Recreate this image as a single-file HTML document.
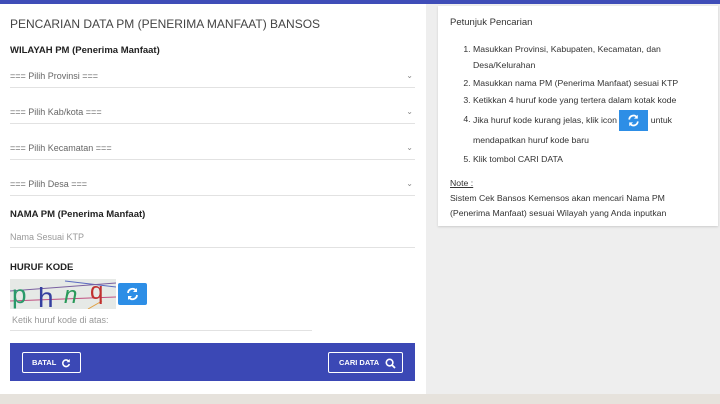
<!DOCTYPE html><html><head><style>
body{margin:0;width:720px;height:404px;overflow:hidden;background:#eeeeee;font-family:"Liberation Sans",sans-serif;position:relative}
.top{position:absolute;left:0;top:0;width:720px;height:4px;background:#3f4db8}
.left{position:absolute;left:0;top:0;width:426px;height:394px;background:#fff}
.t{position:absolute;left:10px;top:17px;font-size:12px;color:#444}
.lb{position:absolute;left:10px;font-size:9.5px;font-weight:bold;color:#222}
.sel{position:absolute;left:10px;width:405px;height:16px;padding-top:2px;border-bottom:1px solid #e2e2e2;font-size:9px;color:#666}
.sel span{position:absolute;right:2px;top:2px;font-size:8px;color:#888}
.ph{position:absolute;font-size:9px;color:#999}
.btn{position:absolute;background:#2d8ee6;border-radius:2px}
.bar{position:absolute;left:10px;top:343px;width:405px;height:38px;background:#3b48b5}
.ob{position:absolute;top:9px;height:21px;border:1.5px solid #fff;border-radius:2px;color:#fff;font-size:7.5px;font-weight:bold;line-height:19px;box-sizing:border-box}
.ob svg{position:absolute;top:4.5px}
.right{position:absolute;left:438px;top:6px;width:280px;height:220px;background:#fff;box-shadow:0 1px 2px #ccc;font-size:8.7px;color:#333}
ol{margin:0;padding:0;position:absolute;left:35px;top:35px;width:240px}
li{line-height:16px;margin-bottom:1.5px}
.tb{position:absolute;left:0;top:394px;width:720px;height:10px;background:#e6e2dc}
</style></head><body>
<div class="left">
<div class="t">PENCARIAN DATA PM (PENERIMA MANFAAT) BANSOS</div>
<div class="lb" style="top:45px">WILAYAH PM (Penerima Manfaat)</div>
<div class="sel" style="top:69px">=== Pilih Provinsi ===<span>⌄</span></div>
<div class="sel" style="top:105px">=== Pilih Kab/kota ===<span>⌄</span></div>
<div class="sel" style="top:141px">=== Pilih Kecamatan ===<span>⌄</span></div>
<div class="sel" style="top:177px">=== Pilih Desa ===<span>⌄</span></div>
<div class="lb" style="top:209px">NAMA PM (Penerima Manfaat)</div>
<div class="ph" style="left:10px;top:232px">Nama Sesuai KTP</div>
<div style="position:absolute;left:10px;top:247px;width:405px;border-bottom:1px solid #e2e2e2"></div>
<div class="lb" style="top:262px">HURUF KODE</div>
<svg style="position:absolute;left:10px;top:279px" width="106" height="30"><rect width="106" height="30" fill="#e6e9e6"/><line x1="55" y1="2" x2="106" y2="8" stroke="#5a6ac0"/><line x1="0" y1="12" x2="106" y2="4" stroke="#7a60a0"/><line x1="0" y1="22" x2="106" y2="18" stroke="#c05080"/><line x1="78" y1="30" x2="92" y2="22" stroke="#e0a040"/><text x="2" y="24" font-size="26" fill="#2a9a6a" font-family="Liberation Sans Narrow,Liberation Sans">p</text><text x="28" y="28" font-size="28" fill="#3540a0" font-family="Liberation Sans Narrow,Liberation Sans">h</text><text x="54" y="24" font-size="24" fill="#2a9a5a" font-style="italic" font-family="Liberation Sans">n</text><text x="80" y="20" font-size="24" fill="#c03030" font-family="Liberation Sans">q</text></svg>
<div class="btn" style="left:118px;top:283px;width:29px;height:22px"><svg width="29" height="22" viewBox="0 0 29 22"><path d="M10 10a4.5 4.5 0 0 1 8-2.5M19 12a4.5 4.5 0 0 1-8 2.5" stroke="#fff" stroke-width="1.8" fill="none"/><path d="M19 5v4h-4zM10 17v-4h4z" fill="#fff"/></svg></div>
<div class="ph" style="left:12px;top:315px">Ketik huruf kode di atas:</div>
<div style="position:absolute;left:10px;top:330px;width:302px;border-bottom:1px solid #e2e2e2"></div>
<div class="bar">
<div class="ob" style="left:12px;width:59px;padding-left:9px">BATAL<svg style="left:38px" width="10" height="10" viewBox="0 0 10 10"><path d="M7.5 3A3.3 3.3 0 1 0 8.3 6" stroke="#fff" stroke-width="1.6" fill="none"/><path d="M8.8 1v3.3H5.5z" fill="#fff"/></svg></div>
<div class="ob" style="left:318px;width:75px;padding-left:10px">CARI DATA<svg style="left:56px" width="11" height="11" viewBox="0 0 11 11"><circle cx="4.6" cy="4.6" r="3.3" stroke="#fff" stroke-width="1.6" fill="none"/><path d="M7 7l3 3" stroke="#fff" stroke-width="1.8"/></svg></div>
</div>
</div>
<div class="top"></div>
<div class="right">
<div style="position:absolute;left:12px;top:11px;font-size:9.5px">Petunjuk Pencarian</div>
<ol>
<li>Masukkan Provinsi, Kabupaten, Kecamatan, dan Desa/Kelurahan</li>
<li>Masukkan nama PM (Penerima Manfaat) sesuai KTP</li>
<li>Ketikkan 4 huruf kode yang tertera dalam kotak kode</li>
<li style="line-height:19px">Jika huruf kode kurang jelas, klik icon <span style="display:inline-block;width:29px;height:21px;background:#2d8ee6;vertical-align:middle"><svg width="29" height="21" viewBox="0 0 29 22"><path d="M10 10a4.5 4.5 0 0 1 8-2.5M19 12a4.5 4.5 0 0 1-8 2.5" stroke="#fff" stroke-width="1.8" fill="none"/><path d="M19 5v4h-4zM10 17v-4h4z" fill="#fff"/></svg></span> untuk mendapatkan huruf kode baru</li>
<li>Klik tombol CARI DATA</li>
</ol>
<div style="position:absolute;left:12px;top:170px;line-height:15px"><u>Note :</u><br>Sistem Cek Bansos Kemensos akan mencari Nama PM<br>(Penerima Manfaat) sesuai Wilayah yang Anda inputkan</div>
</div>
<div class="tb"></div>
</body></html>
